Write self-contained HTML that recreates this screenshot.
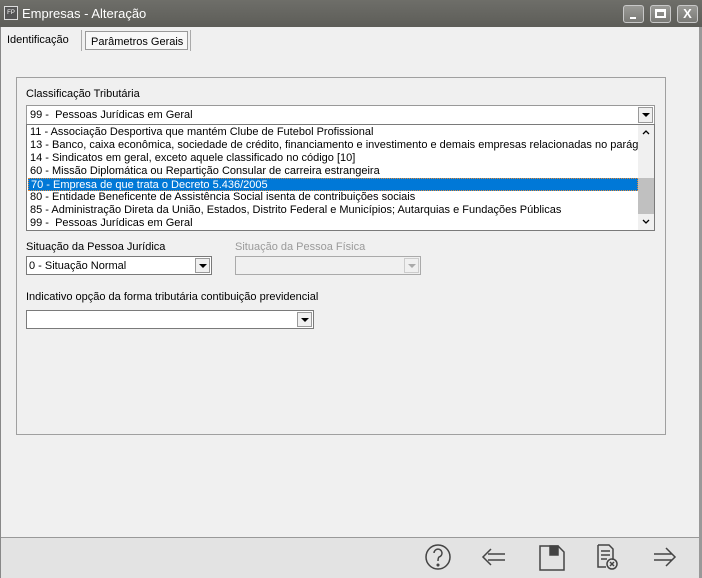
<!DOCTYPE html>
<html><head><style>
*{margin:0;padding:0;box-sizing:border-box}
body{width:702px;height:578px;position:relative;background:#f0f0f0;font-family:"Liberation Sans",sans-serif;font-size:11px;color:#000;overflow:hidden}
.abs{position:absolute}
#title{left:0;top:0;width:702px;height:27px;background:linear-gradient(#6e6e69,#5d5d58);color:#fff;font-size:14px}
.wb{top:5px;width:21px;height:18px;border:1px solid #c8c8c8;border-radius:3px;background:linear-gradient(#9a9a96,#7a7a76)}
.combo{background:#fff;border:1px solid #7a7a7a}
.arr{position:absolute;right:1px;top:1px;width:15px;bottom:1px;background:#f0f0f0}
.arr:after{content:"";position:absolute;left:3px;top:50%;margin-top:-2px;border-left:4px solid transparent;border-right:4px solid transparent;border-top:4px solid #000}
.dis:after{border-top-color:#aaa}
.row{position:absolute;left:3px;height:13px;line-height:13px;white-space:nowrap;width:608px;overflow:hidden}
</style></head><body>
<div id="title" class="abs">
 <div class="abs" style="left:4px;top:6px;width:14px;height:14px;border:1px solid #ddd;background:#555;font-size:6px;line-height:12px;text-align:center">FP</div>
 <div class="abs" style="left:22px;top:6px;font-size:13px">Empresas - Alteração</div>
 <div class="abs wb" style="left:623px"><div class="abs" style="left:6px;top:11px;width:6px;height:2px;background:#fff"></div></div>
 <div class="abs wb" style="left:650px"><div class="abs" style="left:4px;top:3px;width:11px;height:9px;border:2px solid #fff;border-top-width:3px"></div></div>
 <div class="abs wb" style="left:677px;color:#fff;font-weight:bold;font-size:13px;text-align:center;line-height:16px">X</div>
</div>
<div class="abs" style="left:0;top:27px;width:1px;height:551px;background:#888"></div>
<div class="abs" style="left:699px;top:27px;width:3px;height:551px;background:#999"></div>
<div class="abs" style="left:7px;top:34px">Identificação</div>
<div class="abs" style="left:81px;top:30px;width:1px;height:21px;background:#aaa"></div>
<div class="abs" style="left:85px;top:31px;height:19px;border:1px solid #999;background:#f8f8f8;width:103px;padding:4px 0 0 5px">Parâmetros Gerais</div>
<div class="abs" style="left:190px;top:30px;width:1px;height:21px;background:#aaa"></div>

<div class="abs" style="left:16px;top:77px;width:650px;height:358px;border:1px solid #a0a0a0"></div>
<div class="abs" style="left:26px;top:88px">Classificação Tributária</div>
<div class="abs combo" style="left:26px;top:105px;width:629px;height:20px;border-color:#999"><div class="abs" style="left:3px;top:3px">99 -&nbsp; Pessoas Jurídicas em Geral</div><div class="arr" style="border:1px solid #999"></div></div>
<div class="abs" style="left:26px;top:124px;width:629px;height:107px;background:#fff;border:1px solid #7a7a7a">
 <div class="row" style="top:1px">11 - Associação Desportiva que mantém Clube de Futebol Profissional</div>
 <div class="row" style="top:14px">13 - Banco, caixa econômica, sociedade de crédito, financiamento e investimento e demais empresas relacionadas no parágrafo</div>
 <div class="row" style="top:27px">14 - Sindicatos em geral, exceto aquele classificado no código [10]</div>
 <div class="row" style="top:40px">60 - Missão Diplomática ou Repartição Consular de carreira estrangeira</div>
 <div class="row" style="top:53px;left:1px;width:610px;padding-left:2px;background:#0078d7;color:#fff;border:1px dotted #e08a3a">70 - Empresa de que trata o Decreto 5.436/2005</div>
 <div class="row" style="top:66px">80 - Entidade Beneficente de Assistência Social isenta de contribuições sociais</div>
 <div class="row" style="top:79px">85 - Administração Direta da União, Estados, Distrito Federal e Municípios; Autarquias e Fundações Públicas</div>
 <div class="row" style="top:92px">99 -&nbsp; Pessoas Jurídicas em Geral</div>
 <div class="abs" style="right:0;top:0;width:16px;height:105px;background:#f0f0f0">
  <div class="abs" style="left:0;top:53px;width:16px;height:36px;background:#c0c0c0"></div>
  <svg class="abs" style="left:4px;top:4px" width="8" height="6"><path d="M1 5l3-3 3 3" stroke="#000" stroke-width="1.3" fill="none"/></svg>
  <svg class="abs" style="left:4px;top:94px" width="8" height="6"><path d="M1 1l3 3 3-3" stroke="#000" stroke-width="1.3" fill="none"/></svg>
 </div>
</div>

<div class="abs" style="left:26px;top:241px">Situação da Pessoa Jurídica</div>
<div class="abs combo" style="left:26px;top:256px;width:186px;height:19px"><div class="abs" style="left:2px;top:3px">0 - Situação Normal</div><div class="arr" style="border:1px solid #999"></div></div>
<div class="abs" style="left:235px;top:241px;color:#9a9a9a">Situação da Pessoa Física</div>
<div class="abs" style="left:235px;top:256px;width:186px;height:19px;border:1px solid #aaa;background:#f0f0f0"><div class="arr dis" style="border:1px solid #ccc"></div></div>
<div class="abs" style="left:26px;top:291px">Indicativo opção da forma tributária contibuição previdencial</div>
<div class="abs combo" style="left:26px;top:310px;width:288px;height:19px"><div class="arr" style="border:1px solid #999"></div></div>

<div class="abs" style="left:1px;top:537px;width:698px;height:41px;background:#e3e3e3;border-top:1px solid #999"></div>
<svg class="abs" style="left:420px;top:540px" width="280" height="35" fill="none" stroke="#444" stroke-width="1.5">
 <circle cx="18" cy="17" r="12"/>
 <path d="M14 13a4 4 0 1 1 5 4c-1 1-1 2-1 4"/><circle cx="18" cy="25" r=".8" fill="#444"/>
 <path d="M85 14h-17M85 20h-17M71 9l-8 8 8 8"/>
 <path d="M120 6h18l6 6v18h-24z"/><rect x="130" y="6" width="8" height="9" fill="#444"/>
 <path d="M178 5h11l4 4v11M178 5v22h8M181 11h9M181 15h9M181 19h6"/><circle cx="192" cy="24" r="5"/><path d="M190 22l4 4M194 22l-4 4"/>
 <path d="M234 14h18M234 20h18M246 8l9 9-9 9"/>
</svg>
</body></html>
